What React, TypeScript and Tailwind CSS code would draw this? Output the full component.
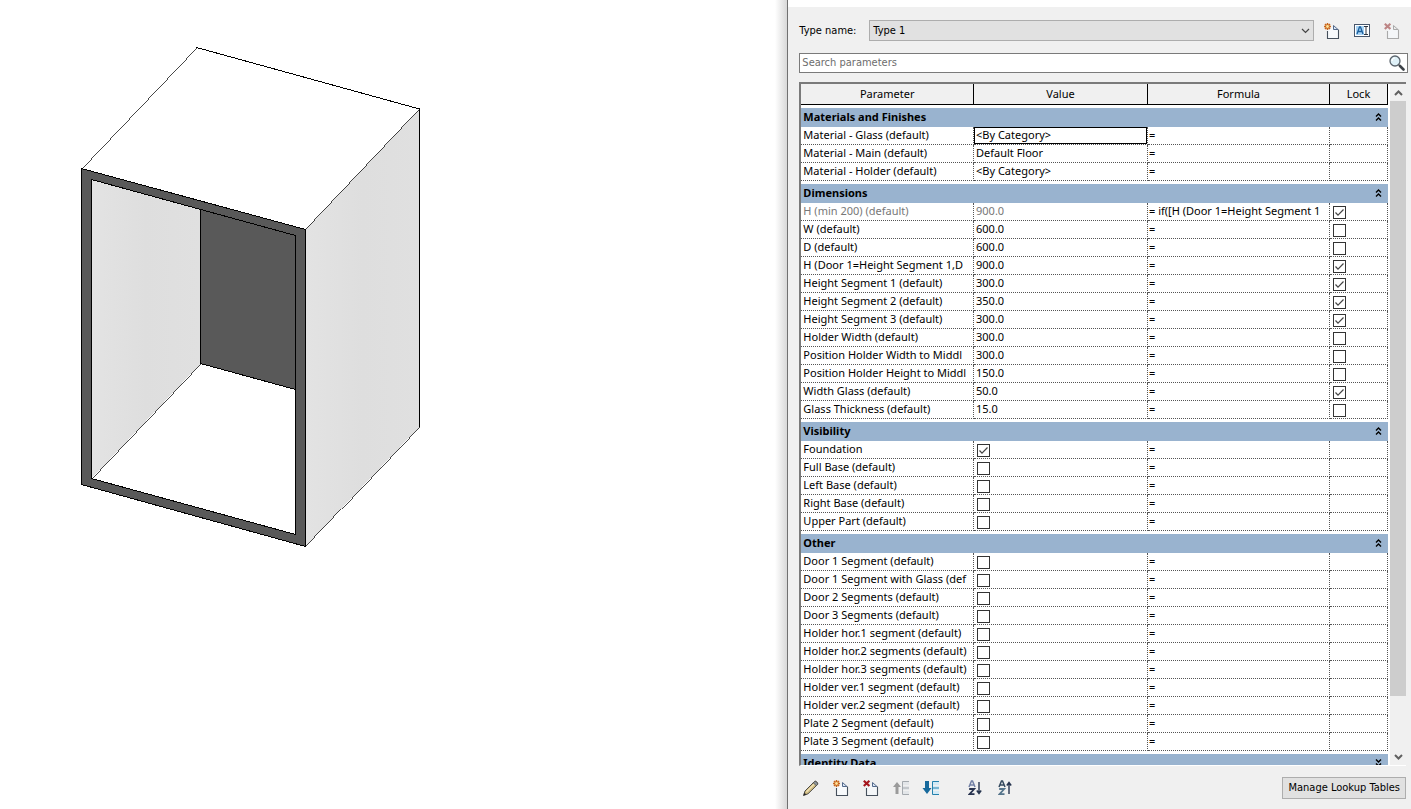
import { useState } from "react";
import type { ReactNode } from "react";

interface Param {
  name: string;
  value?: string;
  checked?: boolean;
  formula?: string;
  lock?: boolean;
  muted?: boolean;
  active?: boolean;
}

interface Group {
  title: string;
  rows: Param[];
  collapsed?: boolean;
}

const groups: Group[] = [
  {
    title: "Materials and Finishes",
    rows: [
      { name: "Material - Glass (default)", value: "<By Category>", active: true },
      { name: "Material - Main (default)", value: "Default Floor" },
      { name: "Material - Holder (default)", value: "<By Category>" },
    ],
  },
  {
    title: "Dimensions",
    rows: [
      { name: "H (min 200) (default)", value: "900.0", formula: "if([H (Door 1=Height Segment 1", lock: true, muted: true },
      { name: "W (default)", value: "600.0", lock: false },
      { name: "D (default)", value: "600.0", lock: false },
      { name: "H (Door 1=Height Segment 1,D", value: "900.0", lock: true },
      { name: "Height Segment 1 (default)", value: "300.0", lock: true },
      { name: "Height Segment 2 (default)", value: "350.0", lock: true },
      { name: "Height Segment 3 (default)", value: "300.0", lock: true },
      { name: "Holder Width (default)", value: "300.0", lock: false },
      { name: "Position Holder Width to Middl", value: "300.0", lock: false },
      { name: "Position Holder Height to Middl", value: "150.0", lock: false },
      { name: "Width Glass (default)", value: "50.0", lock: true },
      { name: "Glass Thickness (default)", value: "15.0", lock: false },
    ],
  },
  {
    title: "Visibility",
    rows: [
      { name: "Foundation", checked: true },
      { name: "Full Base (default)", checked: false },
      { name: "Left Base (default)", checked: false },
      { name: "Right Base (default)", checked: false },
      { name: "Upper Part (default)", checked: false },
    ],
  },
  {
    title: "Other",
    rows: [
      { name: "Door 1 Segment (default)", checked: false },
      { name: "Door 1 Segment with Glass (def", checked: false },
      { name: "Door 2 Segments (default)", checked: false },
      { name: "Door 3 Segments (default)", checked: false },
      { name: "Holder hor.1 segment (default)", checked: false },
      { name: "Holder hor.2 segments (default)", checked: false },
      { name: "Holder hor.3 segments (default)", checked: false },
      { name: "Holder ver.1 segment (default)", checked: false },
      { name: "Holder ver.2 segment (default)", checked: false },
      { name: "Plate 2 Segment (default)", checked: false },
      { name: "Plate 3 Segment (default)", checked: false },
    ],
  },
  { title: "Identity Data", rows: [], collapsed: true },
];

/* ---------- Icons ---------- */

function NewIcon() {
  return (
    <svg width="16" height="16" viewBox="0 0 16 16" fill="none">
      <path d="M3.5 8v7.5h11V7l-4-4z" fill="#f8fafc" />
      <path d="M3.5 8v7.5h11V6.500" stroke="#46505c" strokeWidth="1.100" />
      <path d="M9.500 2.500v4h4.500z" fill="#dce8f6" stroke="#52688a" strokeLinejoin="round" />
      <path d="M3.500 0v7M0 3.500h7M1 1l5 5M6 1L1 6" stroke="#c9661a" strokeWidth="1.500" />
      <circle cx="3.500" cy="3.500" r="1.400" fill="#ffe39a" />
    </svg>
  );
}

function DeleteIcon({ disabled }: { disabled?: boolean }) {
  const line = disabled ? "#a9a9a9" : "#46505c";
  return (
    <svg width="16" height="16" viewBox="0 0 16 16" fill="none">
      <path d="M3.5 8v7.5h11V7l-4-4z" fill="#f4f6f8" />
      <path d="M3.5 8v7.5h11V6.500" stroke={line} strokeWidth="1.100" />
      <path
        d="M9.500 2.500v4h4.500z"
        fill={disabled ? "#ececec" : "#dce8f6"}
        stroke={disabled ? "#a9a9a9" : "#52688a"}
        strokeLinejoin="round"
      />
      <path d="M.8.800l5.600 5.200M6.400.800L.8 6" stroke={disabled ? "#bd8585" : "#a5161d"} strokeWidth="2.200" />
    </svg>
  );
}

function RenameIcon() {
  return (
    <svg width="16" height="14" viewBox="0 0 16 14" fill="none">
      <rect x=".5" y=".5" width="15" height="12" fill="#fff" stroke="#47566b" />
      <path d="M2 2h8v9H2z" fill="#a9d4f5" />
      <path d="M3 10l2.500-7h1L9 10M4 7.500h4" stroke="#1c5f9c" strokeWidth="1.300" />
      <path d="M10 2.500h4M12 3v7M10 10.500h4" stroke="#2c3440" />
    </svg>
  );
}

function SearchIcon() {
  return (
    <svg width="16" height="16" viewBox="0 0 16 16" fill="none">
      <path d="M9.500 9.500l1.500 1.500" stroke="#555" strokeWidth="1.500" />
      <path d="M11 11l3.500 3.500" stroke="#3d4248" strokeWidth="2.600" strokeLinecap="round" />
      <circle cx="6" cy="6" r="5" fill="#dff1f8" stroke="#5b646d" strokeWidth="1.300" />
      <path d="M3 6a3 3 0 0 1 3-3" stroke="#fff" strokeWidth="1.200" />
    </svg>
  );
}

function PencilIcon() {
  return (
    <svg width="18" height="18" viewBox="0 0 18 18" fill="none">
      <path d="M1.500 16.500L3 12 12.500 2.500c1-1.200 4 1.500 3 3L6 14.800z" fill="#d2bd83" stroke="#4d4b46" strokeLinejoin="round" />
      <path d="M4.500 12.800L13.500 3.800" stroke="#f3e6bd" strokeWidth="1.200" />
      <path d="M11.300 3.800l3 3 1.300-1.400c.8-1.300-2-3.900-3-2.900z" fill="#8c949b" stroke="#4d4b46" strokeWidth=".8" />
      <path d="M1.500 16.500l1-2.800 1.800 1.800z" fill="#222" />
    </svg>
  );
}

function MoveIcon({ down }: { down?: boolean }) {
  return (
    <svg width="18" height="16" viewBox="0 0 18 16" fill="none">
      {down ? (
        <path d="M3 1h4v7h2.500L5 14 .5 8H3z" fill="#17699c" />
      ) : (
        <path d="M3.500 14h3V7H9L5 2 1 7h2.500z" fill="#9b9b9b" />
      )}
      <path d="M10 1h7v4h-7zM10 6h7v4h-7zM10 11h7v3h-7z" fill={down ? "#d3eaf6" : "#e3e6e9"} />
      <path d="M17 1.500h-6.500v13H17M10.500 8H17" stroke={down ? "#2581ad" : "#a4a9ae"} />
    </svg>
  );
}

function SortIcon({ up }: { up?: boolean }) {
  return (
    <svg width="15" height="16" viewBox="0 0 15 16" fill="none">
      <path d="M1 7l2.500-6h1L7 7M2 5h4" stroke={up ? "#34495e" : "#7280a5"} strokeWidth="1.500" />
      <path d="M1.200 9h5L1.500 14.200h5" stroke={up ? "#56758c" : "#27324f"} strokeWidth="1.800" />
      {up ? (
        <path d="M11 14V3M8.800 5.500L11 2.500l2.200 3" stroke="#26344f" strokeWidth="1.400" />
      ) : (
        <path d="M11 2v11M8.800 10.500L11 13.500l2.200-3" stroke="#26344f" strokeWidth="1.400" />
      )}
    </svg>
  );
}

function Chevron({ up, bold, className }: { up?: boolean; bold?: boolean; className?: string }) {
  return (
    <svg width="9" height="6" viewBox="0 0 9 6" fill="none" className={className}>
      <path d={up ? "M1 5l3.500-3.500L8 5" : "M1 1l3.500 3.500L8 1"} stroke="currentColor" strokeWidth={bold ? 2 : 1.2} />
    </svg>
  );
}

function DoubleChevron({ down }: { down?: boolean }) {
  return (
    <svg width="7" height="8" viewBox="0 0 7 8" fill="none" className={down ? "rotate-180" : ""}>
      <path d="M1 3.500L3.500 1 6 3.500M1 7.500L3.500 5 6 7.500" stroke="#000" strokeWidth="1.400" />
    </svg>
  );
}

/* ---------- Parts ---------- */

function Check({ label, initial }: { label: string; initial: boolean }) {
  const [on, setOn] = useState(initial);
  return (
    <span className="relative mt-[3px] ml-[3px] block size-[13px]">
      <input
        type="checkbox"
        aria-label={label}
        checked={on}
        onChange={() => setOn(!on)}
        className="block size-[13px] appearance-none border border-[#333] bg-white"
      />
      {on && (
        <svg viewBox="0 0 13 13" fill="none" className="pointer-events-none absolute inset-0 size-[13px]">
          <path d="M2.500 6.500L5 9.200l5.500-5.700" stroke="#444" strokeWidth="1.200" />
        </svg>
      )}
    </span>
  );
}

function ToolButton({ label, disabled, children }: { label: string; disabled?: boolean; children: ReactNode }) {
  return (
    <button type="button" aria-label={label} disabled={disabled} className="flex size-5 items-center justify-center">
      {children}
    </button>
  );
}

function ParamRow({ row }: { row: Param }) {
  const cell = "h-[18px] overflow-hidden border-r border-b border-dotted border-[#555] p-0 align-top leading-4 whitespace-nowrap";
  return (
    <tr className="h-[18px]">
      <td className={`${cell} pl-[2px] ${row.muted ? "text-[#777]" : ""}`}>{row.name}</td>
      <td className={`${cell} ${row.muted ? "text-[#777]" : ""}`}>
        {row.active && (
          <input
            aria-label={row.name}
            defaultValue={row.value}
            className="block h-[17px] w-full border border-black bg-white pb-[2px] pl-px leading-4 outline-none"
          />
        )}
        {!row.active && row.value && <span className="block pl-[2px]">{row.value}</span>}
        {row.checked !== undefined && <Check label={row.name} initial={row.checked} />}
      </td>
      <td className={`${cell} pl-px`}>= {row.formula}</td>
      <td className={cell}>{row.lock !== undefined && <Check label={`Lock ${row.name}`} initial={row.lock} />}</td>
    </tr>
  );
}

function ParamGroup({ group }: { group: Group }) {
  const [open, setOpen] = useState(!group.collapsed);
  return (
    <tbody>
      <tr>
        <th colSpan={4} className="h-[22px] border-t-[3px] border-white bg-[#99b3cf] bg-clip-padding p-0 text-left font-bold">
          <button
            type="button"
            onClick={() => setOpen(!open)}
            className="flex h-[19px] w-full items-center justify-between pr-[6px] pb-[2px] pl-[2px] text-left leading-4"
          >
            {group.title}
            <DoubleChevron down={!open} />
          </button>
        </th>
      </tr>
      {open && group.rows.map((row) => <ParamRow key={row.name} row={row} />)}
    </tbody>
  );
}

function Cabinet() {
  return (
    <svg
      width="340"
      height="501"
      viewBox="81 47 340 501"
      shapeRendering="crispEdges"
      fill="none"
      className="mt-[47px] ml-[81px] block"
    >
      <defs>
        <linearGradient id="side" x1="0" y1="0" x2="1" y2="0">
          <stop offset="0" stopColor="#e3e3e3" />
          <stop offset="0.5" stopColor="#dedede" />
          <stop offset="1" stopColor="#e0e0e0" />
        </linearGradient>
      </defs>
      {/* faces */}
      <path d="M305.500 229.500L419.500 109V426.500L305.500 546.500z" fill="url(#side)" />
      <path d="M81.500 168.500L305.500 229.500V546.500L81.500 484.500z" fill="#595959" />
      <path d="M91.500 179.500L295.500 235.500V534.500L91.500 478.500z" fill="#fff" />
      <path d="M91.500 179.500L200.500 209.500V363.500L91.500 478.500z" fill="url(#side)" />
      <path d="M200.500 209.500L295.500 235.500V389.500L200.500 363.500z" fill="#595959" />
      {/* upright and shallow edges */}
      <path
        d="M196.500 47.500L419.500 109V426.500M81.500 168.500L305.500 229.500V546.500L81.500 484.500zM91.500 179.500L295.500 235.500V534.500L91.500 478.500zM200.500 209.500V363.500L295.500 389.500"
        stroke="#000"
        strokeWidth="1"
      />
      {/* receding edges */}
      <path
        d="M81.500 168.500L196.500 47.500M305.500 229.500L419.500 109M305.500 546.500L419.500 426.500M91.500 478.500L200.500 363.500"
        stroke="#000"
        strokeWidth="0.72"
      />
    </svg>
  );
}

export default function App() {
  return (
    <div className="flex h-screen bg-white font-['Noto_Sans',sans-serif] text-[11px] text-black">
      <main className="min-w-0 flex-1 overflow-hidden">
        <Cabinet />
      </main>

      <div className="w-3 shrink-0 bg-linear-to-r from-white to-[#d8d8d8]" />

      <section className="flex w-[44.2%] shrink-0 flex-col border-l border-[#707070] bg-[#f0f0f0]">
        <div className="h-[7px] shrink-0 bg-white" />

        {/* Type name */}
        <div className="mt-[13px] flex items-center pr-[9px] pl-[11px] font-['DejaVu_Sans_Condensed','Noto_Sans',sans-serif]">
          <label htmlFor="type-name" className="w-[70px] leading-4">
            Type name:
          </label>
          <div className="relative flex-1">
            <select
              id="type-name"
              className="block h-[21px] w-full appearance-none border border-[#adadad] bg-[#e1e1e1] pl-[3px] leading-4"
            >
              <option>Type 1</option>
            </select>
            <Chevron className="pointer-events-none absolute top-2 right-1 text-[#444]" />
          </div>
          <div className="ml-2 flex gap-[10px]">
            <ToolButton label="New type">
              <NewIcon />
            </ToolButton>
            <ToolButton label="Rename type">
              <RenameIcon />
            </ToolButton>
            <ToolButton label="Delete type" disabled>
              <DeleteIcon disabled />
            </ToolButton>
          </div>
        </div>

        {/* Search */}
        <div className="mt-3 mr-[3px] ml-[11px] flex h-5 shrink-0 items-center border border-[#7a7a7a] bg-white pr-[2px] font-['DejaVu_Sans_Condensed','Noto_Sans',sans-serif]">
          <input
            type="search"
            aria-label="Search parameters"
            placeholder="Search parameters"
            className="min-w-0 flex-1 bg-transparent pl-[2px] leading-4 outline-none placeholder:text-[#6d6d6d]"
          />
          <SearchIcon />
        </div>

        {/* Parameter grid */}
        <div className="mt-[9px] mr-[5px] ml-[11px] flex min-h-0 flex-1 border-t-2 border-b border-l-2 border-t-[#7a7a7a] border-b-white border-l-[#7a7a7a] bg-white">
          <div className="min-w-0 flex-1 overflow-y-auto [scrollbar-width:none]">
            <table className="w-full table-fixed border-separate border-spacing-0">
              <colgroup>
                <col />
                <col className="w-[174px]" />
                <col className="w-[182px]" />
                <col className="w-[58px]" />
              </colgroup>
              <thead>
                <tr>
                  {["Parameter", "Value", "Formula", "Lock"].map((title) => (
                    <th key={title} className="h-[21px] border-r border-b border-black bg-[#f0f0f0] p-0 font-normal leading-4">
                      {title}
                    </th>
                  ))}
                </tr>
              </thead>
              {groups.map((group) => (
                <ParamGroup key={group.title} group={group} />
              ))}
            </table>
          </div>
          <div className="ml-[2px] flex w-[16px] flex-col bg-[#f0f0f0]">
            <button type="button" aria-label="Scroll up" className="flex h-[17px] shrink-0 items-center justify-center text-[#606060]">
              <Chevron up bold />
            </button>
            <div className="flex-1">
              <div className="h-[92%] bg-[#cdcdcd]" />
            </div>
            <button type="button" aria-label="Scroll down" className="flex h-[17px] shrink-0 items-center justify-center text-[#606060]">
              <Chevron bold />
            </button>
          </div>
        </div>

        {/* Footer tools */}
        <footer className="flex h-[43px] shrink-0 items-center justify-between pr-[5px] pl-[13px]">
          <div className="flex gap-[10px]">
            <ToolButton label="Edit parameter">
              <PencilIcon />
            </ToolButton>
            <ToolButton label="New parameter">
              <NewIcon />
            </ToolButton>
            <ToolButton label="Delete parameter">
              <DeleteIcon />
            </ToolButton>
            <ToolButton label="Move up" disabled>
              <MoveIcon />
            </ToolButton>
            <ToolButton label="Move down">
              <MoveIcon down />
            </ToolButton>
            <div className="ml-[14px] flex gap-[10px]">
              <ToolButton label="Sort ascending">
                <SortIcon />
              </ToolButton>
              <ToolButton label="Sort descending">
                <SortIcon up />
              </ToolButton>
            </div>
          </div>
          <button
            type="button"
            className="h-[22px] border border-[#adadad] bg-[#e1e1e1] px-[5px] font-['DejaVu_Sans_Condensed','Noto_Sans',sans-serif] leading-4"
          >
            Manage Lookup Tables
          </button>
        </footer>
      </section>
    </div>
  );
}
